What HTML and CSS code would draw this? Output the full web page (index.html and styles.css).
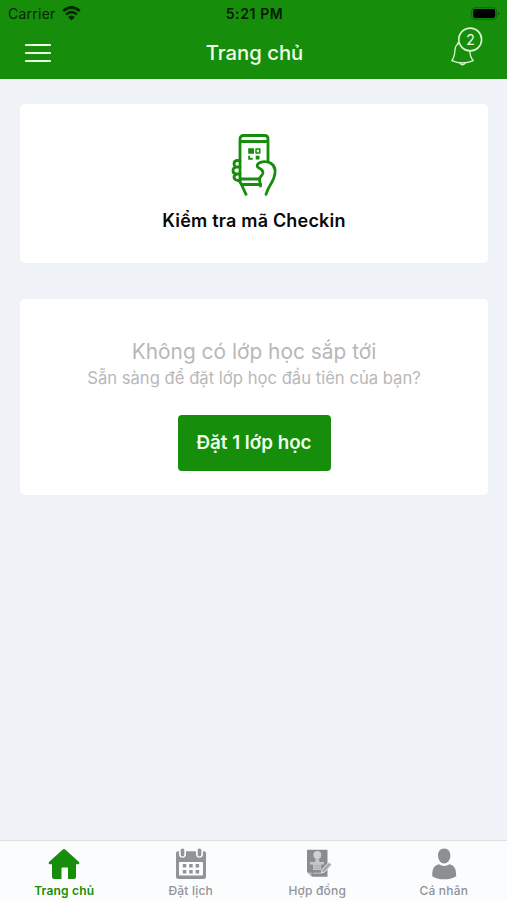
FILE: index.html
```html
<!DOCTYPE html>
<html lang="vi">
<head>
<meta charset="utf-8">
<title>Trang chủ</title>
<link rel="stylesheet" href="styles.css">
</head>
<body>
<div class="app">
  <header class="header">
    <div class="status">
      <div class="carrier"><span>Carrier</span>
        <svg width="19" height="15" viewBox="0 0 19 15"><g fill="none" stroke="#062706" stroke-width="2.7"><path d="M1.2 5Q9.5-2 17.8 5"/><path d="M4 8.5Q9.5 3.8 15 8.5"/></g><path d="M6 10.9Q9.5 7.9 13 10.9L9.5 14.4Z" fill="#062706"/></svg>
      </div>
      <span class="time">5:21 PM</span>
      <svg class="battery" width="30" height="13" viewBox="0 0 30 13"><rect x=".7" y=".7" width="25" height="11.6" rx="3.2" fill="none" stroke="#0b650b"/><rect x="2.2" y="2" width="22" height="9" rx="2" fill="#000"/><path d="M27.2 4.5Q29 6.5 27.2 8.5Z" fill="#0b500b"/></svg>
    </div>
    <div class="nav">
      <svg class="menu" width="26" height="20" viewBox="0 0 26 20"><path d="M1 2H25M1 10H25M1 18H25" stroke="#edffe9" stroke-width="2.2" stroke-linecap="round"/></svg>
      <h1 class="title">Trang chủ</h1>
      <div class="bell">
        <svg width="34" height="40" viewBox="0 0 34 40" fill="none" stroke="#d9f8d1" stroke-width="1.3" stroke-linejoin="round"><path d="M9 16.5C6.2 17.5 5.2 20 5 23C4.7 28 4.3 30.5 1.8 33.7Q7 36 12.5 36T23.3 33.7C20.8 31 20 28.5 19.8 24"/><path d="M9.8 36.2Q12.5 39.5 15.2 36.2M7.4 18.3C7.2 15.5 9 14.4 10 15"/><circle cx="20.2" cy="12.5" r="11.4" fill="#168e0c" stroke-width="1.6"/></svg>
        <span class="count">2</span>
      </div>
    </div>
  </header>
  <main class="main">
    <section class="card checkin">
      <svg width="46" height="62" viewBox="0 0 46 62" fill="none" stroke="#168e0c" stroke-width="2.8" stroke-linecap="round" stroke-linejoin="round">
        <path d="M9 48V5Q9 1.5 12.5 1.5H33.5Q37 1.5 37 5V27M9 7.5H37M9 45H28.5M10.5 50.5H29.5"/>
        <path d="M9 26.5H6.5Q3 26.5 3 29.8T6.5 33H9M9 33H5.5Q2 33 2 36.5T5.5 40H9M9 40H6.5Q3 40 3 43T7 46.5H9"/>
        <path d="M9 48Q11 51 12.5 55L15 60.3M35 60.3Q36.5 55.5 39 51.5Q41.5 47.5 42.8 44Q44.5 39 44 35.5C43 29.5 37 27 31.5 27.8C26 28.5 24.8 32.2 28 34Q32.5 36 31.8 39.5C31 42.5 28 43 28.5 45.5L29.5 52"/>
        <g stroke="none" fill="#168e0c"><path d="M17.2 14.2H23V19.7H17.2ZM24.7 21.8H28.5V25.4H24.7ZM17.2 21.8H19V23.8H21.7V25.7H17.2Z"/></g>
        <path d="M25 15H28.8V19H25Z" stroke-width="1.5"/>
      </svg>
      <h2 class="checkin-title">Kiểm tra mã Checkin</h2>
    </section>
    <section class="card classes">
      <p class="empty">Không có lớp học sắp tới</p>
      <p class="prompt">Sẵn sàng để đặt lớp học đầu tiên của bạn?</p>
      <button class="book"><span>Đặt 1 lớp học</span></button>
    </section>
  </main>
  <nav class="tabs">
    <a class="tab active">
      <svg width="32" height="32" viewBox="0 0 32 32" fill="#168e0c"><path d="M14.8 1.6Q16 .6 17.2 1.6L31 14Q32 16.2 30 16.3H28V29Q28 31 26 31H20V20.5Q20 19.5 19 19.5H14.5Q13.5 19.5 13.5 20.5V31H6Q4 31 4 29V16.3H2Q0 16.2 1 14Z"/></svg>
      <span class="label-home">Trang chủ</span>
    </a>
    <a class="tab">
      <svg width="32" height="32" viewBox="0 0 32 32"><path d="M1 5Q1 3.3 3 3.3H4V6Q4 9.8 7.5 9.8T11 6V3.3H21V6Q21 9.8 24.5 9.8T28 6V3.3H29Q31 3.3 31 5V28.5Q31 31 28.5 31H3.5Q1 31 1 28.5Z" fill="#929396"/><rect x="5.7" y=".5" width="3.6" height="8" rx="1.7" fill="#929396"/><rect x="22.7" y=".5" width="3.6" height="8" rx="1.7" fill="#929396"/><rect x="4" y="14" width="24" height="13.5" rx="1" fill="#fafcfe"/><path d="M7.8 16H11.3V19.5H7.8ZM14.2 16H17.7V19.5H14.2ZM20.6 16H24.1V19.5H20.6ZM7.8 22H11.3V25.5H7.8ZM14.2 22H17.7V25.5H14.2ZM20.6 22H24.1V25.5H20.6Z" fill="#929396"/></svg>
      <span class="label-book">Đặt lịch</span>
    </a>
    <a class="tab">
      <svg width="32" height="32" viewBox="0 0 32 32"><path d="M6 1.8H26.5V28.8H11L6 24Z" fill="#8b8c8f"/><path d="M6.3 24.5H10.5V28.6Z" fill="#b8babc"/><circle cx="16.3" cy="7" r="3.9" fill="#cfd0d2"/><path d="M14.7 11H18L18.5 14H23V16.5H20V22H12V16.5H9V14H14Z" fill="#c5c6c8"/><path d="M12.5 17.7H19.5M12.5 20.2H19.5M12 25.3H20" stroke="#b0b1b3" stroke-width="1.4"/><path d="M20.3 25L21.2 21.3L28 14.4L30.5 16.8L23.9 23.8Z" fill="#a7a8ab" stroke="#e5e6e8" stroke-width="1"/></svg>
      <span class="label-contract">Hợp đồng</span>
    </a>
    <a class="tab">
      <svg width="32" height="32" viewBox="0 0 32 32" fill="#8e8f92"><path d="M16.2 .6C20.2 .6 22.6 3.7 22.4 8C22.1 12.4 19.4 15.5 16.2 15.5S10.3 12.4 10 8C9.8 3.7 12.2 .6 16.2 .6ZM11 16.3Q16.2 19.7 21.4 16.3C26.5 17.3 28.2 20.5 28.2 28.2Q24 31.3 16.2 31.3T4.2 28.2C4.2 20.5 6 17.3 11 16.3Z"/></svg>
      <span class="label-user">Cá nhân</span>
    </a>
  </nav>
</div>
</body>
</html>
```
FILE: styles.css
```css
* { box-sizing: border-box; }
body { margin: 0; font-family: Inter, "Liberation Sans", sans-serif; }
h1, h2, p { margin: 0; white-space: nowrap; }
svg { display: block; flex: none; }
.app { width: 507px; height: 900px; display: flex; flex-direction: column; background: #eff3f8; }
.header { height: 79px; background: #168e0c; flex: none; }
.status { height: 27px; display: grid; grid-template-columns: 1fr auto 1fr; align-items: center; padding: 0 6px 0 8px; color: #062706; }
.carrier { display: flex; align-items: center; gap: 6px; font-size: 14px; line-height: 20px; letter-spacing: .25px; }
.time { font-size: 14px; font-weight: 600; line-height: 20px; letter-spacing: .6px; color: #031b03; }
.battery { justify-self: end; }
.nav { height: 52px; display: grid; grid-template-columns: 1fr auto 1fr; align-items: center; padding: 0 23px 0 25px; }
.title { font-size: 20.3px; font-weight: 500; line-height: 26px; color: #edffe9; }
.bell { position: relative; justify-self: end; width: 34px; height: 40px; margin-bottom: 12px; }
.count { position: absolute; left: 9px; top: 3px; width: 23px; text-align: center; font-size: 14px; line-height: 20px; color: #edffe9; }
.main { flex: 1; padding: 25px 19px 0 20px; }
.card { background: #fff; border-radius: 5px; display: flex; flex-direction: column; align-items: center; }
.checkin { height: 159px; padding-top: 30px; }
.checkin-title { font-size: 18px; line-height: 24px; font-weight: 600; letter-spacing: .2px; margin-top: 13px; color: #080808; }
.classes { height: 196px; margin-top: 35.5px; padding-top: 39.5px; color: #b8b8b8; }
.empty { font-size: 20.9px; line-height: 28px; }
.prompt { font-size: 16.65px; line-height: 24px; }
.book { width: 153px; height: 56px; margin-top: 24.5px; padding: 0; border: 0; border-radius: 4px; background: #168e0c; color: #edffe9; font: 600 18.8px/24px Inter, sans-serif; white-space: nowrap; }
.tabs { height: 60px; display: grid; grid-template-columns: repeat(4, 1fr); background: #fafcfe; border-top: 1px solid #dce0e2; padding-left: 1px; }
.tab { display: flex; flex-direction: column; align-items: center; padding-top: 7px; color: #929396; font-size: 12px; font-weight: 500; line-height: 16px; }
.tab span { margin-top: 3px; white-space: nowrap; letter-spacing: .2px; }
.tab.active { color: #168e0c; }
.tab.active span { font-weight: 600; }
```
